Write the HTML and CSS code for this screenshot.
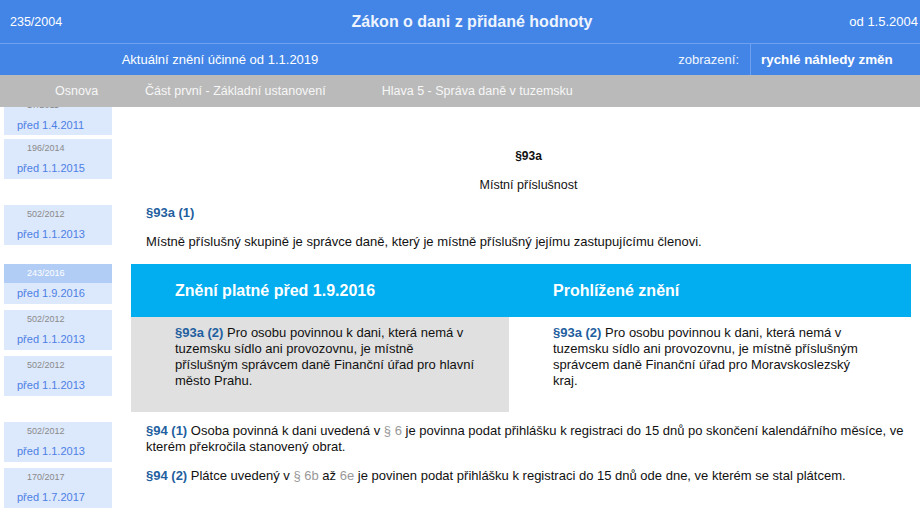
FILE: index.html
```html
<!DOCTYPE html>
<html lang="cs">
<head>
  <meta charset="UTF-8" />
  <meta name="viewport" content="width=device-width, initial-scale=1.0" />
  <title>Zákon o dani z přidané hodnoty - 235/2004</title>
  <link rel="stylesheet" href="styles.css">
</head>
<body>
  <header class="topbar">
    <div class="law-no">235/2004</div>
    <h1>Zákon o dani z přidané hodnoty</h1>
    <div class="law-from">od 1.5.2004</div>
  </header>

  <div class="subbar">
    <div class="version">Aktuální znění účinné od 1.1.2019</div>
    <div class="view-label">zobrazení:</div>
    <div class="view-mode">rychlé náhledy změn</div>
  </div>

  <nav class="crumbs">
    <a href="#" class="crumb">Osnova</a>
    <a href="#" class="crumb">Část první - Základní ustanovení</a>
    <a href="#" class="crumb crumb-last">Hlava 5 - Správa daně v tuzemsku</a>
  </nav>

  <main class="doc">
    <!-- nadpis paragrafu -->
    <section class="row row-title">
      <div class="revs">
        <div class="rev"><div class="rev-num">17/2011</div><div class="rev-date">před 1.4.2011</div></div>
        <div class="rev"><div class="rev-num">196/2014</div><div class="rev-date">před 1.1.2015</div></div>
      </div>
      <div class="text title-block">
        <div class="par-no">§93a</div>
        <div class="par-name">Místní příslušnost</div>
      </div>
    </section>

    <section class="row row-p1">
      <div class="revs">
        <div class="rev"><div class="rev-num">502/2012</div><div class="rev-date">před 1.1.2013</div></div>
      </div>
      <div class="text">
        <div class="sub-no">§93a (1)</div>
        <p class="first-p">Místně příslušný skupině je správce daně, který je místně příslušný jejímu zastupujícímu členovi.</p>
      </div>
    </section>

    <!-- srovnání znění -->
    <section class="row row-compare">
      <div class="revs">
        <div class="rev rev-active"><div class="rev-num">243/2016</div><div class="rev-date">před 1.9.2016</div></div>
        <div class="rev"><div class="rev-num">502/2012</div><div class="rev-date">před 1.1.2013</div></div>
        <div class="rev"><div class="rev-num">502/2012</div><div class="rev-date">před 1.1.2013</div></div>
      </div>
      <div class="compare">
        <div class="cmp-head">Znění platné před 1.9.2016</div>
        <div class="cmp-head">Prohlížené znění</div>
        <div class="cmp-body cmp-old"><span class="ref">§93a (2)</span> Pro osobu povinnou k dani, která nemá v tuzemsku sídlo ani provozovnu, je místně příslušným správcem daně Finanční úřad pro hlavní město Prahu.</div>
        <div class="cmp-body cmp-new"><span class="ref">§93a (2)</span> Pro osobu povinnou k dani, která nemá v tuzemsku sídlo ani provozovnu, je místně příslušným správcem daně Finanční úřad pro Moravskoslezský kraj.</div>
      </div>
    </section>

    <section class="row row-94a">
      <div class="revs">
        <div class="rev"><div class="rev-num">502/2012</div><div class="rev-date">před 1.1.2013</div></div>
      </div>
      <div class="text">
        <p><span class="ref">§94 (1)</span> Osoba povinná k dani uvedená v <a href="#" class="link">§ 6</a> je povinna podat přihlášku k registraci do 15 dnů po skončení kalendářního měsíce, ve kterém překročila stanovený obrat.</p>
      </div>
    </section>

    <section class="row row-94b">
      <div class="revs">
        <div class="rev"><div class="rev-num">170/2017</div><div class="rev-date">před 1.7.2017</div></div>
      </div>
      <div class="text">
        <p><span class="ref">§94 (2)</span> Plátce uvedený v <a href="#" class="link">§ 6b</a> až <a href="#" class="link">6e</a> je povinen podat přihlášku k registraci do 15 dnů ode dne, ve kterém se stal plátcem.</p>
      </div>
    </section>
  </main>
</body>
</html>
```

FILE: styles.css
```css
* { box-sizing: border-box; }
body {
  margin: 0;
  font-family: "Liberation Sans", Arial, sans-serif;
  font-size: 13px;
  color: #111;
  background: #fff;
  height: 508px;
  overflow: hidden;
}
a { text-decoration: none; }

.topbar {
  display: grid;
  grid-template-columns: 1fr auto 1fr;
  align-items: center;
  height: 44px;
  background: #4285e6;
  border-bottom: 1px solid #6ea2f0;
  color: #fff;
}
.law-no {
  padding-left: 10px;
  font-size: 12.5px;
}
.topbar h1 {
  margin: 0;
  padding-left: 24px;
  font-size: 16px;
  color: #eef4ff;
}
.law-from {
  text-align: right;
  padding-right: 2px;
}

.subbar {
  display: flex;
  align-items: stretch;
  height: 31px;
  background: #4285e6;
  color: #fff;
}
.version {
  width: 440px;
  text-align: center;
  line-height: 31px;
}
.view-label {
  margin-left: auto;
  padding-right: 11px;
  line-height: 31px;
  color: #f0f5ff;
}
.view-mode {
  width: 170px;
  border-left: 1px solid #6ea2f0;
  padding-left: 10px;
  line-height: 31px;
  font-weight: bold;
  font-size: 13.4px;
}

.crumbs {
  display: flex;
  height: 32px;
  align-items: center;
  padding-left: 55px;
  background: #bababa;
  font-size: 12.5px;
}
.crumb {
  color: #f7f7f7;
  margin-right: 47px;
}
.crumb-last {
  margin-left: 9px;
}

.doc {
  height: 401px;
  overflow: hidden;
  padding-right: 9px;
}
.row {
  display: grid;
  grid-template-columns: 131px 1fr;
  align-items: start;
}
.row-title { margin-top: -11px; }
.row-p1 { margin-top: 12px; }
.row-compare { margin-top: 14px; }
.row-94a { margin-top: 10px; }
.row-94b { margin-top: 6px; }

.revs {
  display: flex;
  flex-direction: column;
  gap: 6px;
  padding-left: 4px;
  width: 112px;
}
.row-title .revs { gap: 4px; }
.row-title .rev:first-child { height: 39px; }
.rev {
  height: 40px;
  background: #dce8fc;
}
.rev-num {
  height: 19px;
  line-height: 19px;
  padding-left: 23px;
  font-size: 9px;
  color: #8a8a8a;
}
.rev-date {
  line-height: 21px;
  padding-left: 13px;
  font-size: 11px;
  color: #4d80e4;
}
.rev-active .rev-num {
  background: #b2cdf5;
  color: #fff;
}

.text {
  padding-left: 15px;
  line-height: 16px;
}
.text p { margin: 0; }
.title-block {
  text-align: center;
  padding-top: 52px;
}
.par-no {
  font-weight: bold;
  font-size: 12px;
}
.par-name {
  margin-top: 13px;
  font-size: 12.5px;
}
.sub-no {
  font-weight: bold;
  color: #1f5fa0;
}
.first-p { margin-top: 13px !important; }
.row-94a .text { padding-top: 1px; }

.ref {
  font-weight: bold;
  color: #1f5fa0;
}
.link { color: #999; }

.compare {
  display: grid;
  grid-template-columns: 378px 1fr;
}
.cmp-head {
  height: 53px;
  line-height: 53px;
  padding-left: 44px;
  background: #02aeef;
  color: #fff;
  font-size: 16px;
  font-weight: bold;
}
.cmp-body {
  padding: 8px 44px 23px 44px;
  line-height: 16px;
}
.cmp-old {
  background: #e0e0e0;
  padding-right: 30px;
}
```
